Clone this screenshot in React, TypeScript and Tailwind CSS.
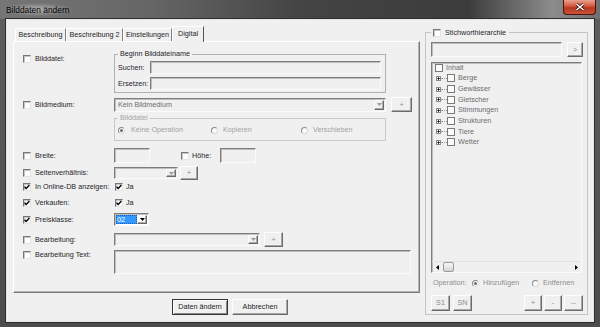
import React from 'react';

const sunken =
  'border border-t-[#7d7d7d] border-l-[#7d7d7d] border-r-[#fbfbfb] border-b-[#fbfbfb] shadow-[inset_1px_1px_0_#bdbdbd]';
const raised =
  'border border-t-[#fdfdfd] border-l-[#fdfdfd] border-r-[#6b6b6b] border-b-[#6b6b6b] shadow-[inset_-1px_-1px_0_#a8a8a8]';

function Check({ checked = false }: { checked?: boolean }) {
  return (
    <span className="w-[8px] h-[8px] shrink-0 flex items-center justify-center bg-white border border-t-[#777] border-l-[#777] border-r-[#e4e4e4] border-b-[#e4e4e4] shadow-[inset_1px_1px_0_#c4c4c4]">
      {checked && (
        <svg width="6" height="6" viewBox="0 0 6 6">
          <path d="M0.6 2.7 L2.2 4.4 L5.4 1.1" stroke="#000" strokeWidth="1.4" fill="none" />
        </svg>
      )}
    </span>
  );
}

function Radio({ checked = false }: { checked?: boolean }) {
  return (
    <span className="w-[7px] h-[7px] shrink-0 rounded-full flex items-center justify-center bg-[#fafafa] border border-t-[#8a8a8a] border-l-[#8a8a8a] border-r-[#dcdcdc] border-b-[#dcdcdc]">
      {checked && <span className="w-[3px] h-[3px] rounded-full bg-[#6a6a6a]" />}
    </span>
  );
}

function Tri({ color = '#000' }: { color?: string }) {
  return (
    <svg width="5" height="3" viewBox="0 0 5 3">
      <path d="M0 0 H5 L2.5 3 Z" fill={color} />
    </svg>
  );
}

function Btn({ label, className, gray }: { label: string; className: string; gray?: boolean }) {
  return (
    <div
      className={`${className} ${raised} bg-[#f0f0f0] flex items-center justify-center ${
        gray ? 'text-[#8a8a8a]' : 'text-[#1e1e1e]'
      }`}
    >
      {label}
    </div>
  );
}

function Combo({ className, text, gray }: { className: string; text?: string; gray?: boolean }) {
  return (
    <div className={`${className} ${sunken} bg-[#f0f0f0] flex items-stretch p-[1px]`}>
      <span className="flex-1 flex items-center pl-[2px] text-[#6d6d6d]">{text}</span>
      <span className={`w-[10px] ${raised} flex items-center justify-center`}>
        <Tri color={gray ? '#9a9a9a' : '#000'} />
      </span>
    </div>
  );
}

function Lbl({ text, checked, h }: { text: string; checked?: boolean; h: string }) {
  return (
    <div className={`w-[100px] ${h} pl-[9px] shrink-0 flex items-center gap-[4px]`}>
      <Check checked={checked} />
      <span className="whitespace-nowrap">{text}</span>
    </div>
  );
}

function Plus() {
  return (
    <svg width="5" height="5" viewBox="0 0 5 5" className="shrink-0">
      <rect x="0.5" y="0.5" width="4" height="4" fill="#fff" stroke="#8a8a8a" strokeWidth="1" />
      <path d="M1.3 2.5 H3.7 M2.5 1.3 V3.7" stroke="#000" strokeWidth="0.9" />
    </svg>
  );
}

function TreeBox() {
  return <span className="w-[8px] h-[8px] shrink-0 border border-[#7a7a7a] bg-[#fbfbfb]" />;
}

const treeItems = ['Berge', 'Gewässer', 'Gletscher', 'Stimmungen', 'Strukturen', 'Tiere', 'Wetter'];

export default function App() {
  return (
    <div className="w-[600px] h-[327px] overflow-hidden flex flex-col bg-[linear-gradient(180deg,#5e5e5e,#4c4c4c)] font-['Liberation_Sans',Arial,sans-serif] text-[7.2px] leading-[8px] text-[#1e1e1e]">
      {/* title bar */}
      <div className="h-[19px] shrink-0 flex items-start bg-[linear-gradient(90deg,#767676_0%,#666_25%,#444_50%,#3c3c3c_78%,#8c8c8c_92%,#707070_100%)]">
        <div className="ml-[2px] mt-[3px] px-[4px] h-[13px] flex items-center text-[8.4px] text-black bg-[radial-gradient(ellipse_at_center,rgba(255,255,255,0.45),rgba(255,255,255,0)_72%)]">
          Bilddaten ändern
        </div>
        <div className="ml-auto mr-[4px] w-[33px] h-[15px] rounded-b-[4px] border border-t-0 border-[#4a1409] bg-[linear-gradient(180deg,#e8a08e_0%,#d0583f_45%,#b9361f_55%,#c9533a_100%)] flex items-center justify-center">
          <svg width="10" height="8" viewBox="0 0 10 8">
            <path d="M1.5 1 L8.5 7 M8.5 1 L1.5 7" stroke="#3a0d06" strokeWidth="3" />
            <path d="M1.5 1 L8.5 7 M8.5 1 L1.5 7" stroke="#fff" strokeWidth="1.6" />
          </svg>
        </div>
      </div>

      {/* client */}
      <div className="mx-[6px] h-[303px] shrink-0 bg-[#f0f0f0] border border-[#e6e6e6] shadow-[0_0_0_1px_#2e2e2e] flex">
        {/* left column */}
        <div className="ml-[6px] mt-[6px] w-[407px] flex flex-col">
          <div className="h-[15px] pl-[2px] flex items-end relative z-10">
            <div className="w-[51px] h-[13px] border-t border-l border-r border-t-white border-l-white border-r-[#7f7f7f] flex items-center justify-center">
              Beschreibung
            </div>
            <div className="w-[57px] h-[13px] border-t border-l border-r border-t-white border-l-white border-r-[#7f7f7f] flex items-center justify-center">
              Beschreibung 2
            </div>
            <div className="w-[49px] h-[13px] border-t border-l border-r border-t-white border-l-white border-r-[#7f7f7f] flex items-center justify-center">
              Einstellungen
            </div>
            <div className="w-[32px] h-[16px] -mb-[1px] bg-[#f0f0f0] border-t border-l border-r border-t-white border-l-white border-r-[#555] flex items-start pt-[3px] justify-center">
              Digital
            </div>
          </div>

          <div className="h-[252px] border border-t-white border-l-white border-r-[#7a7a7a] border-b-[#7a7a7a] shadow-[inset_-1px_-1px_0_#b4b4b4] flex flex-col">
            {/* Bilddatei */}
            <div className="flex mt-[8px]">
              <Lbl text="Bilddatei:" h="h-[18px]" />
              <fieldset className="w-[272px] border border-[#b0b0b0] pl-[3px] pr-[4px] pt-[3px] pb-[2px]">
                <legend className="px-[2px] leading-[8px]">Beginn Bilddateiname</legend>
                <div className="flex items-center h-[13px]">
                  <span className="w-[32px]">Suchen:</span>
                  <div className={`w-[231px] h-[13px] ${sunken}`} />
                </div>
                <div className="flex items-center h-[13px] mt-[3px]">
                  <span className="w-[32px]">Ersetzen:</span>
                  <div className={`w-[231px] h-[13px] ${sunken}`} />
                </div>
              </fieldset>
            </div>

            {/* Bildmedium */}
            <div className="flex items-center mt-[4px] h-[15px]">
              <Lbl text="Bildmedium:" h="h-[15px]" />
              <Combo className="w-[272px] h-[14px]" text="Kein Bildmedium" gray />
              <Btn label="+" gray className="ml-[5px] w-[21px] h-[15px]" />
            </div>

            {/* Bilddatei operation */}
            <div className="flex mt-[2px]">
              <div className="w-[100px] shrink-0" />
              <fieldset className="w-[272px] border border-[#c8c8c8] pl-[3px] pt-[3px] pb-[5px]">
                <legend className="px-[2px] leading-[8px] text-[#a3a3a3]">Bilddatei</legend>
                <div className="flex items-center h-[10px] text-[#a3a3a3]">
                  <div className="w-[93px] flex items-center gap-[6px]">
                    <Radio checked />
                    Keine Operation
                  </div>
                  <div className="w-[90px] flex items-center gap-[5px]">
                    <Radio />
                    Kopieren
                  </div>
                  <div className="flex items-center gap-[5px]">
                    <Radio />
                    Verschieben
                  </div>
                </div>
              </fieldset>
            </div>

            {/* Breite / Höhe */}
            <div className="flex items-center mt-[7px] h-[15px]">
              <Lbl text="Breite:" h="h-[15px]" />
              <div className={`w-[36px] h-[15px] ${sunken}`} />
              <div className="ml-[31px] w-[39px] flex items-center gap-[3px]">
                <Check />
                Höhe:
              </div>
              <div className={`w-[36px] h-[15px] ${sunken}`} />
            </div>

            {/* Seitenverhältnis */}
            <div className="flex items-center mt-[3px] h-[14px]">
              <Lbl text="Seitenverhältnis:" h="h-[14px]" />
              <Combo className="w-[64px] h-[12px]" gray />
              <Btn label="+" gray className="ml-[2px] w-[18px] h-[14px]" />
            </div>

            {/* Online-DB */}
            <div className="flex items-center mt-[1px] h-[12px]">
              <Lbl text="In Online-DB anzeigen:" checked h="h-[12px]" />
              <div className="ml-[1px] flex items-center gap-[3px]">
                <Check checked />
                Ja
              </div>
            </div>

            {/* Verkaufen */}
            <div className="flex items-center mt-[4px] h-[12px]">
              <Lbl text="Verkaufen:" checked h="h-[12px]" />
              <div className="ml-[1px] flex items-center gap-[3px]">
                <Check checked />
                Ja
              </div>
            </div>

            {/* Preisklasse */}
            <div className="flex items-center mt-[4px] h-[13px]">
              <Lbl text="Preisklasse:" checked h="h-[13px]" />
              <div className={`w-[35px] h-[13px] ${sunken} bg-white flex items-stretch p-[1px]`}>
                <span className="w-[21px] bg-[#3399ff] text-white pl-[1px] flex items-center outline-1 outline-dotted outline-[#1a5fb0] -outline-offset-1">
                  02
                </span>
                <span className={`ml-auto w-[10px] ${raised} flex items-center justify-center`}>
                  <Tri />
                </span>
              </div>
            </div>

            {/* Bearbeitung */}
            <div className="flex items-center mt-[6px] h-[15px]">
              <Lbl text="Bearbeitung:" h="h-[15px]" />
              <Combo className="w-[146px] h-[13px]" gray />
              <Btn label="+" gray className="ml-[4px] w-[19px] h-[15px]" />
            </div>

            {/* Bearbeitung Text */}
            <div className="flex items-start mt-[3px] h-[24px]">
              <Lbl text="Bearbeitung Text:" h="h-[10px]" />
              <div className={`w-[297px] h-[24px] ${sunken}`} />
            </div>
          </div>

          <div className="flex mt-[6px] ml-[159px] gap-[4px]">
            <div className="w-[56px] h-[16px] border border-[#333] bg-[#f0f0f0] shadow-[inset_1px_1px_0_#fff,inset_-1px_-1px_0_#8a8a8a] flex items-center justify-center">
              Daten ändern
            </div>
            <Btn label="Abbrechen" className="w-[56px] h-[16px]" />
          </div>
        </div>

        {/* right column */}
        <fieldset className="ml-[5px] mt-[8px] w-[163px] self-start border border-[#c4c4c4] pl-[5px] pr-[4px] pb-[3px]">
          <legend className="pl-[2px] pr-[3px] h-[9px] flex items-center gap-[4px]">
            <Check />
            Stichworthierarchie
          </legend>
          <div className="flex mt-[5px] gap-[5px]">
            <div className={`w-[131px] h-[15px] ${sunken}`} />
            <Btn label=">" gray className="w-[16px] h-[15px]" />
          </div>

          <div className={`w-[151px] h-[211px] mt-[5px] flex flex-col ${sunken}`}>
            <div className="flex-1 pl-[3px] text-[#6d6d6d]">
              <div className="flex items-center h-[10px] gap-[3px]">
                <TreeBox />
                Inhalt
              </div>
              {treeItems.map((t) => (
                <div key={t} className="flex items-center h-[10.7px] pl-[1px]">
                  <Plus />
                  <span className="w-[6px] border-t border-dotted border-[#9a9a9a]" />
                  <TreeBox />
                  <span className="ml-[3px]">{t}</span>
                </div>
              ))}
            </div>
            <div className="h-[11px] border-t border-[#e2e2e2] flex items-center pl-[4px] pr-[3px]">
              <svg width="3" height="5" viewBox="0 0 3 5">
                <path d="M3 0 V5 L0 2.5 Z" fill="#000" />
              </svg>
              <span className="ml-[4px] w-[11px] h-[10px] rounded-[2px] border border-[#9a9a9a] bg-[linear-gradient(180deg,#f8f8f8,#d4d4d4)]" />
              <svg width="3" height="5" viewBox="0 0 3 5" className="ml-auto">
                <path d="M0 0 V5 L3 2.5 Z" fill="#000" />
              </svg>
            </div>
          </div>

          <div className="flex items-center mt-[5px] h-[10px] pl-[2px] text-[#8e8e8e]">
            <span className="w-[39px]">Operation:</span>
            <div className="w-[60px] flex items-center gap-[4px]">
              <Radio checked />
              Hinzufügen
            </div>
            <div className="flex items-center gap-[4px]">
              <Radio />
              Entfernen
            </div>
          </div>

          <div className="flex mt-[7px] h-[16px]">
            <Btn label="S1" gray className="w-[19px] h-[16px]" />
            <Btn label="SN" gray className="ml-[3px] w-[19px] h-[16px]" />
            <div className="ml-auto flex gap-[2px]">
              <Btn label="+" gray className="w-[18px] h-[16px]" />
              <Btn label="-" gray className="w-[18px] h-[16px]" />
              <Btn label="--" gray className="w-[19px] h-[16px]" />
            </div>
          </div>
        </fieldset>
      </div>
    </div>
  );
}
